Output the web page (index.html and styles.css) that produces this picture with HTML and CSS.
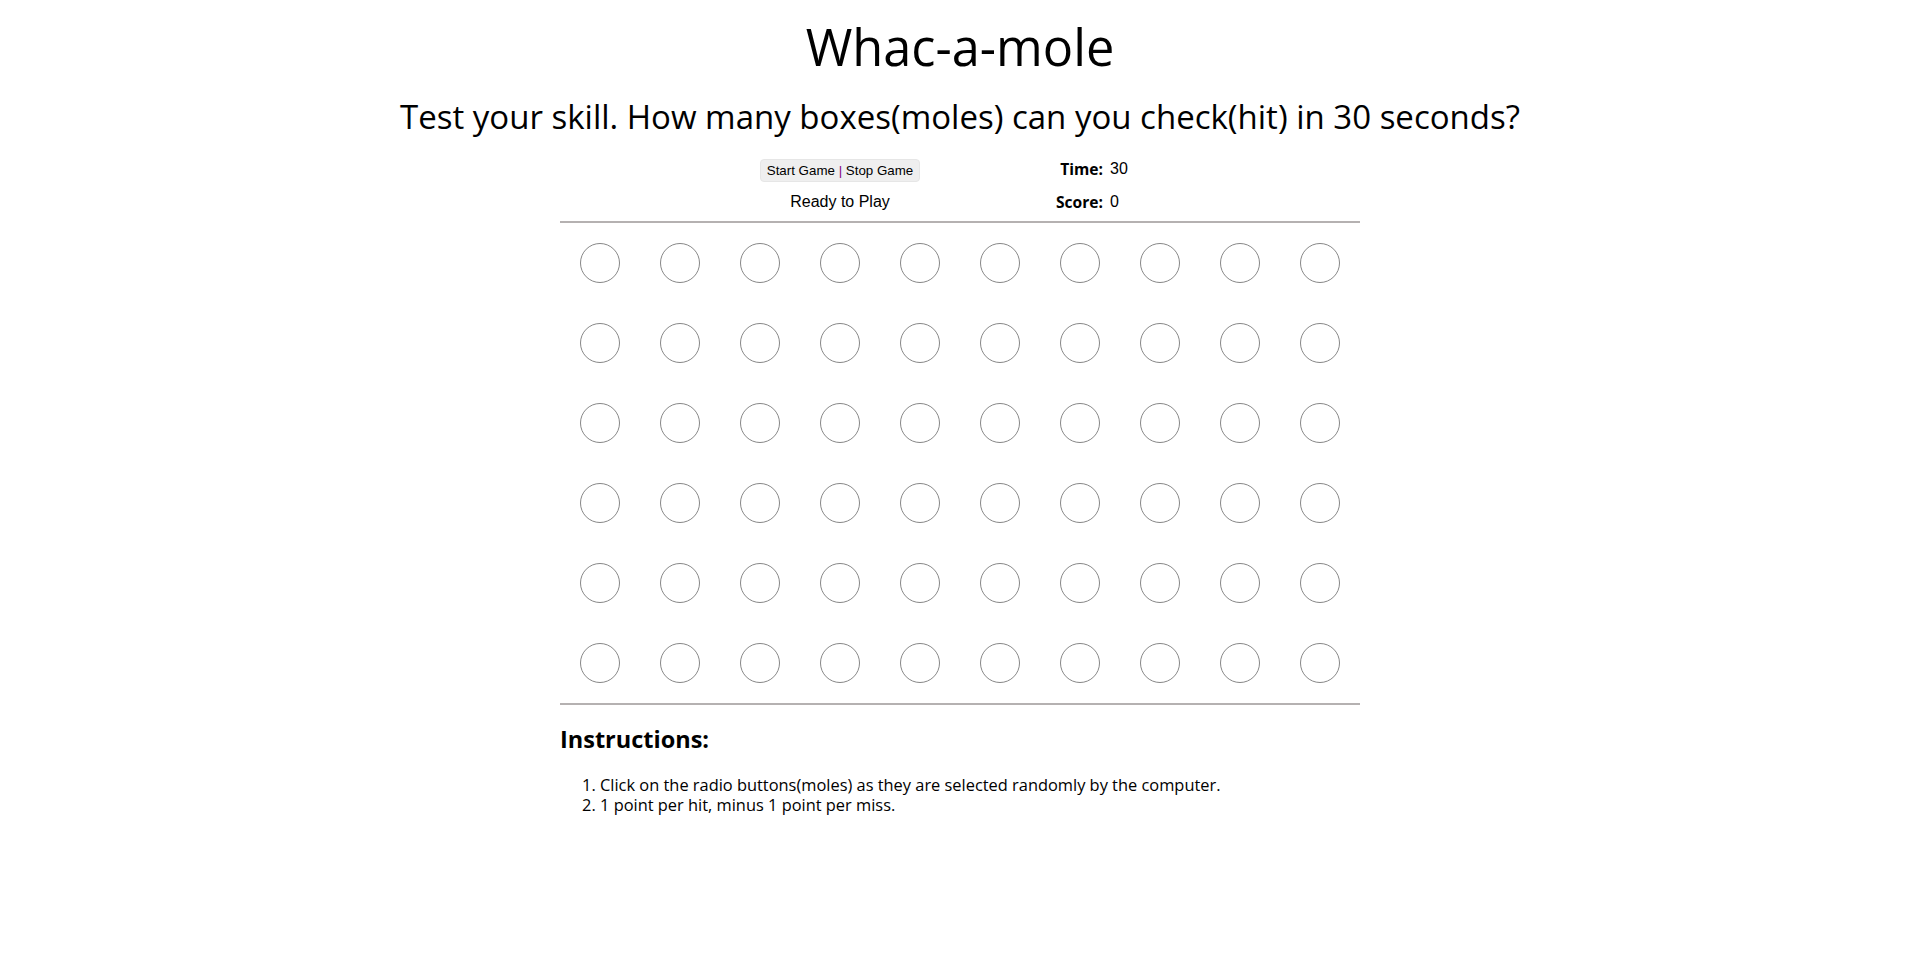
FILE: index.html
```html
<!DOCTYPE html>
<html>
<head>
<meta charset="utf-8">
<title>Whac-a-mole</title>
<link rel="stylesheet" href="styles.css">
</head>
<body>
<div class="page">
  <h1 class="title">Whac-a-mole</h1>
  <h2 class="subtitle">Test your skill. How many boxes(moles) can you check(hit) in 30 seconds?</h2>
  <div class="panel">
    <div class="controls">
      <div class="ctl-cell"><button class="btn">Start Game <span class="pipe">|</span> Stop Game</button></div>
      <div class="label row1">Time:</div>
      <div class="value row1">30</div>
      <div class="ctl-cell status">Ready to Play</div>
      <div class="label">Score:</div>
      <div class="value">0</div>
    </div>
    <div class="board">
      <div class="cell"><span class="mole"></span></div><div class="cell"><span class="mole"></span></div><div class="cell"><span class="mole"></span></div><div class="cell"><span class="mole"></span></div><div class="cell"><span class="mole"></span></div><div class="cell"><span class="mole"></span></div><div class="cell"><span class="mole"></span></div><div class="cell"><span class="mole"></span></div><div class="cell"><span class="mole"></span></div><div class="cell"><span class="mole"></span></div>
      <div class="cell"><span class="mole"></span></div><div class="cell"><span class="mole"></span></div><div class="cell"><span class="mole"></span></div><div class="cell"><span class="mole"></span></div><div class="cell"><span class="mole"></span></div><div class="cell"><span class="mole"></span></div><div class="cell"><span class="mole"></span></div><div class="cell"><span class="mole"></span></div><div class="cell"><span class="mole"></span></div><div class="cell"><span class="mole"></span></div>
      <div class="cell"><span class="mole"></span></div><div class="cell"><span class="mole"></span></div><div class="cell"><span class="mole"></span></div><div class="cell"><span class="mole"></span></div><div class="cell"><span class="mole"></span></div><div class="cell"><span class="mole"></span></div><div class="cell"><span class="mole"></span></div><div class="cell"><span class="mole"></span></div><div class="cell"><span class="mole"></span></div><div class="cell"><span class="mole"></span></div>
      <div class="cell"><span class="mole"></span></div><div class="cell"><span class="mole"></span></div><div class="cell"><span class="mole"></span></div><div class="cell"><span class="mole"></span></div><div class="cell"><span class="mole"></span></div><div class="cell"><span class="mole"></span></div><div class="cell"><span class="mole"></span></div><div class="cell"><span class="mole"></span></div><div class="cell"><span class="mole"></span></div><div class="cell"><span class="mole"></span></div>
      <div class="cell"><span class="mole"></span></div><div class="cell"><span class="mole"></span></div><div class="cell"><span class="mole"></span></div><div class="cell"><span class="mole"></span></div><div class="cell"><span class="mole"></span></div><div class="cell"><span class="mole"></span></div><div class="cell"><span class="mole"></span></div><div class="cell"><span class="mole"></span></div><div class="cell"><span class="mole"></span></div><div class="cell"><span class="mole"></span></div>
      <div class="cell"><span class="mole"></span></div><div class="cell"><span class="mole"></span></div><div class="cell"><span class="mole"></span></div><div class="cell"><span class="mole"></span></div><div class="cell"><span class="mole"></span></div><div class="cell"><span class="mole"></span></div><div class="cell"><span class="mole"></span></div><div class="cell"><span class="mole"></span></div><div class="cell"><span class="mole"></span></div><div class="cell"><span class="mole"></span></div>
    </div>
    <h3 class="instr-title">Instructions:</h3>
    <ol class="instr">
      <li>Click on the radio buttons(moles) as they are selected randomly by the computer.</li>
      <li>1 point per hit, minus 1 point per miss.</li>
    </ol>
  </div>
</div>
</body>
</html>
```
FILE: styles.css
```css
body{margin:0;font-family:"Open Sans",sans-serif;color:#000;background:#fff}
.page{display:flex;flex-direction:column;align-items:center}
.title{font-size:50.5px;font-weight:400;margin:17px 0 0;line-height:60px;white-space:nowrap}
.subtitle{font-size:33px;font-weight:400;margin:20px 0 0;line-height:40px;white-space:nowrap}
.panel{width:800px}
.controls{display:grid;grid-template-columns:160px 240px 143px 1fr;grid-template-rows:34px 20px;align-items:start;margin-top:21px}
.ctl-cell{grid-column:2;text-align:center}
.btn{font:13.33px "Liberation Sans",Arial,sans-serif;background:#efefef;border:1px solid #e6e6e6;border-radius:4px;height:23px;line-height:21px;padding:0 6px;margin-top:1px;color:#000}
.pipe{color:#800080}
.label{text-align:right;font-weight:700;font-size:15.6px;line-height:20px}
.value{font:16px/20px "Liberation Sans",Arial,sans-serif;padding-left:7px}
.row1{padding-top:1px}
.status{font:16px/20px "Liberation Sans",Arial,sans-serif}
.board{display:grid;grid-template-columns:repeat(10,80px);border-top:2px solid #b5b1b1;border-bottom:2px solid #b5b1b1;margin-top:9px}
.cell{height:80px;display:flex;align-items:center;justify-content:center}
.mole{width:40px;height:40px;box-sizing:border-box;border:1px solid #878787;border-radius:50%}
.instr-title{font-size:23.5px;font-weight:700;margin:19px 0 0;line-height:30px}
.instr{font-size:16.4px;margin:21px 0 0;padding-left:40px;line-height:20px}
```
